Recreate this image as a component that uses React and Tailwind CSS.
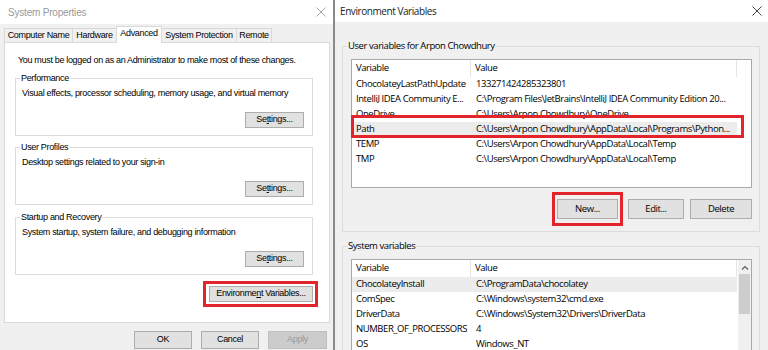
import React from "react";

function XIcon({ className = "" }) {
  return (
    <svg width="10" height="10" viewBox="0 0 10 10" className={className}>
      <path d="M0.5 0.5 L9.5 9.5 M9.5 0.5 L0.5 9.5" stroke="currentColor" strokeWidth="1" fill="none" />
    </svg>
  );
}

function Btn({ children, className = "" }) {
  return (
    <div className={`relative flex items-center justify-center bg-[#e1e1e1] border border-[#adadad] ${className}`}>
      {children}
    </div>
  );
}

function Group({ label, className = "", labelBg = "bg-white", children }) {
  return (
    <div className={`relative border border-[#dcdcdc] ${className}`}>
      <span className={`absolute left-[4px] top-[-7px] px-[1px] leading-[12px] ${labelBg}`}>{label}</span>
      {children}
    </div>
  );
}

function SysGroup({ label, text }) {
  return (
    <Group label={label} className="w-[298px] h-[58px] pt-[8px] pl-[6px] pr-[8px]">
      <div className="leading-[12px]">{text}</div>
      <div className="flex justify-end mt-[13px]">
        <Btn className="w-[59px] h-[16px]">
          <span>
            Se<span className="underline">t</span>tings...
          </span>
        </Btn>
      </div>
    </Group>
  );
}

const userRows = [
  ["ChocolateyLastPathUpdate", "133271424285323801"],
  ["IntelliJ IDEA Community E...", "C:\\Program Files\\JetBrains\\IntelliJ IDEA Community Edition 20..."],
  ["OneDrive", "C:\\Users\\Arpon Chowdhury\\OneDrive"],
  ["Path", "C:\\Users\\Arpon Chowdhury\\AppData\\Local\\Programs\\Python..."],
  ["TEMP", "C:\\Users\\Arpon Chowdhury\\AppData\\Local\\Temp"],
  ["TMP", "C:\\Users\\Arpon Chowdhury\\AppData\\Local\\Temp"],
];

const sysRows = [
  ["ChocolateyInstall", "C:\\ProgramData\\chocolatey"],
  ["ComSpec", "C:\\Windows\\system32\\cmd.exe"],
  ["DriverData", "C:\\Windows\\System32\\Drivers\\DriverData"],
  ["NUMBER_OF_PROCESSORS", "4"],
  ["OS", "Windows_NT"],
];

function Rows({ rows, selected }) {
  return (
    <div className="flex flex-col">
      <div className="flex h-[17px] items-stretch">
        <div className="w-[119px] pl-[4px] flex items-center border-r border-[#e5e5e5]">Variable</div>
        <div className="w-[266px] pl-[4px] flex items-center border-r border-[#e5e5e5]">Value</div>
      </div>
      {rows.map((r, i) => (
        <div
          key={i}
          className={`flex h-[15px] items-center w-[385px] whitespace-nowrap ${i === selected ? "bg-[#ececec]" : ""}`}
        >
          <div className="w-[120px] pl-[4px] overflow-hidden">{r[0]}</div>
          <div className="pl-[4px]">{r[1]}</div>
        </div>
      ))}
    </div>
  );
}

export default function App() {
  return (
    <div className="w-[768px] h-[350px] flex overflow-hidden bg-[#f0f0f0] text-black">
      {/* System Properties */}
      <div className="w-[333px] h-[350px] shrink-0 bg-[#f0f0f0] flex flex-col font-['Liberation_Sans',sans-serif] text-[9px] tracking-[-0.33px]">
        <div className="h-[24px] bg-white flex items-center justify-between pl-[8px] pr-[7px]">
          <span className="text-[10px] text-[#9a9a9a] tracking-[-0.2px]">System Properties</span>
          <XIcon className="text-[#a8a8a8]" />
        </div>
        <div className="flex items-end h-[18px] pl-[4px]">
          <div className="w-[68px] h-[14px] flex items-center justify-center border-t border-l border-[#d9d9d9] bg-[#f0f0f0]">Computer Name</div>
          <div className="w-[44px] h-[14px] flex items-center justify-center border-t border-l border-[#d9d9d9] bg-[#f0f0f0]">Hardware</div>
          <div className="w-[46px] h-[17px] mb-[-1px] relative z-10 flex items-center justify-center border-t border-x border-[#d9d9d9] bg-white pb-[2px]">Advanced</div>
          <div className="w-[74px] h-[14px] flex items-center justify-center border-t border-[#d9d9d9] bg-[#f0f0f0]">System Protection</div>
          <div className="w-[36px] h-[14px] flex items-center justify-center border-t border-x border-[#d9d9d9] bg-[#f0f0f0]">Remote</div>
        </div>
        <div className="ml-[4px] w-[326px] h-[281px] bg-white border border-[#d9d9d9] pt-[11px] pl-[10px] flex flex-col">
          <div className="leading-[12px] pl-[3px]">You must be logged on as an Administrator to make most of these changes.</div>
          <div className="mt-[12px]">
            <SysGroup label="Performance" text="Visual effects, processor scheduling, memory usage, and virtual memory" />
          </div>
          <div className="mt-[11px]">
            <SysGroup label="User Profiles" text="Desktop settings related to your sign-in" />
          </div>
          <div className="mt-[12px]">
            <SysGroup label="Startup and Recovery" text="System startup, system failure, and debugging information" />
          </div>
          <div className="w-[298px] flex justify-end mt-[11px]">
            <Btn className="w-[104px] h-[16px]">
              <span>
                Environme<span className="underline">n</span>t Variables...
              </span>
              <div className="absolute left-[-7px] right-[-6px] top-[-6px] bottom-[-6px] border-[3px] border-[#e3242b]" />
            </Btn>
          </div>
        </div>
        <div className="flex justify-end gap-[9px] pr-[6px] mt-[8px]">
          <Btn className="w-[58px] h-[18px]">OK</Btn>
          <Btn className="w-[58px] h-[18px]">Cancel</Btn>
          <div className="w-[59px] h-[18px] flex items-center justify-center bg-[#cccccc] border border-[#bfbfbf] text-[#9a9a9a]">Apply</div>
        </div>
      </div>

      {/* divider */}
      <div className="w-[2px] h-[350px] bg-[#8a8a8a] shrink-0" />

      {/* Environment Variables */}
      <div className="flex-1 h-[350px] bg-[#f0f0f0] flex flex-col font-['Open_Sans',sans-serif] text-[9.5px] tracking-[-0.43px] overflow-hidden">
        <div className="h-[22px] bg-white flex items-center justify-between pl-[5px] pr-[6px] shrink-0">
          <span className="text-[10px] text-[#222]">Environment Variables</span>
          <XIcon className="text-[#444]" />
        </div>
        <Group label="User variables for Arpon Chowdhury" labelBg="bg-[#f0f0f0]" className="ml-[7px] mt-[24px] w-[418px] h-[186px] pt-[12px] pl-[8px] shrink-0">
          <div className="relative w-[401px] h-[129px] bg-white border border-[#a8a8a8]">
            <Rows rows={userRows} selected={3} />
            <div className="absolute left-[-1px] top-[55px] w-[393px] h-[23px] border-[3px] border-[#e3242b]" />
          </div>
          <div className="w-[401px] flex justify-end mt-[11px]">
            <Btn className="w-[61px] h-[20px]">
              New...
              <div className="absolute left-[-6px] right-[-6px] top-[-8px] bottom-[-8px] border-[3px] border-[#e3242b]" />
            </Btn>
            <Btn className="w-[56px] h-[20px] ml-[10px]">Edit...</Btn>
            <Btn className="w-[62px] h-[20px] ml-[6px]">Delete</Btn>
          </div>
        </Group>
        <Group label="System variables" labelBg="bg-[#f0f0f0]" className="ml-[7px] mt-[14px] w-[418px] h-[150px] pt-[12px] pl-[8px] shrink-0">
          <div className="relative w-[401px] h-[130px] bg-white border border-[#a8a8a8] flex">
            <div className="flex-1">
              <Rows rows={sysRows} selected={0} />
            </div>
            <div className="w-[13px] bg-[#f0f0f0] flex flex-col items-center">
              <div className="h-[14px] flex items-center justify-center">
                <svg width="8" height="5" viewBox="0 0 8 5">
                  <path d="M1 4.5 L4 1.5 L7 4.5" stroke="#606060" strokeWidth="1.2" fill="none" />
                </svg>
              </div>
              <div className="w-[11px] h-[40px] bg-[#cdcdcd]" />
            </div>
          </div>
        </Group>
      </div>
    </div>
  );
}
